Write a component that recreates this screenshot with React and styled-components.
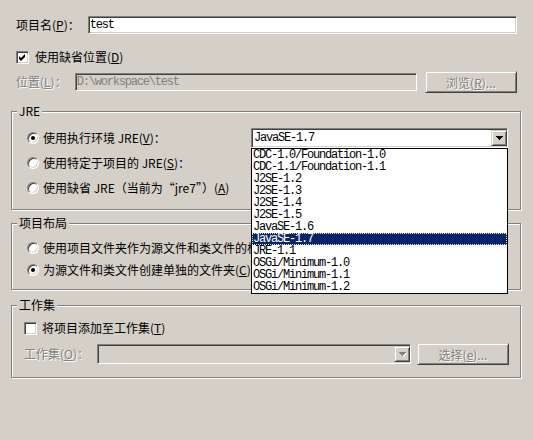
import styled, { createGlobalStyle, css } from "styled-components";

const GlobalStyle = createGlobalStyle`
  html, body {
    margin: 0;
    padding: 0;
    background: #d4d0c8;
  }
  body {
    font-family: "Noto Sans CJK SC", "Liberation Sans", sans-serif;
    font-size: 12px;
    color: #000;
  }
  u {
    text-underline-offset: 1px;
  }
`;

const sunken = css`
  box-sizing: border-box;
  border: 1px solid;
  border-color: #808080 #ffffff #ffffff #808080;
  box-shadow: inset 1px 1px #404040, inset -1px -1px #d4d0c8;
`;

const raised = css`
  box-sizing: border-box;
  border: 1px solid;
  border-color: #d4d0c8 #404040 #404040 #d4d0c8;
  box-shadow: inset 1px 1px #ffffff, inset -1px -1px #808080;
  background: #d4d0c8;
`;

const mono = css`
  font-family: "Liberation Mono", monospace;
  font-size: 12px;
  letter-spacing: -1.2px;
`;

const Page = styled.div`
  width: 533px;
  height: 440px;
  box-sizing: border-box;
  padding: 16px 12px 0 11px;
  display: flex;
  flex-direction: column;
  background: #d4d0c8;
  overflow: hidden;
`;

const Form = styled.div`
  display: flex;
  flex-direction: column;
  padding: 0 4px 0 5px;
`;

const Row = styled.div`
  display: flex;
  align-items: center;
  height: ${(p) => p.$h}px;
  margin-top: ${(p) => p.$mt || 0}px;
  gap: ${(p) => p.$gap ?? 8}px;
`;

const Label = styled.span`
  white-space: nowrap;
  line-height: 14px;
  color: ${(p) => (p.$disabled ? "#808080" : "#000")};
  text-shadow: ${(p) => (p.$disabled ? "1px 1px 0 #fff" : "none")};
`;

const TextField = styled.div`
  ${sunken}
  ${mono}
  flex: 1;
  height: 18px;
  padding: 0 1px;
  display: flex;
  align-items: center;
  white-space: nowrap;
  background: ${(p) => (p.$disabled ? "#d4d0c8" : "#fff")};
  color: ${(p) => (p.$disabled ? "#808080" : "#000")};
`;

const Button = styled.div`
  ${raised}
  width: 92px;
  height: 22px;
  flex-shrink: 0;
  margin-left: ${(p) => p.$ml || 0}px;
  display: flex;
  align-items: center;
  justify-content: center;
  white-space: nowrap;
  color: #808080;
  text-shadow: 1px 1px 0 #fff;
`;

const CheckBox = styled.span`
  ${sunken}
  width: 13px;
  height: 13px;
  flex-shrink: 0;
  background: #fff;
  display: inline-flex;
  align-items: center;
  justify-content: center;
`;

const Radio = styled.span`
  box-sizing: border-box;
  width: 12px;
  height: 12px;
  flex-shrink: 0;
  border-radius: 50%;
  border: 1px solid;
  border-color: #808080 #ffffff #ffffff #808080;
  box-shadow: inset 1px 1px #404040, inset -1px -1px #d4d0c8;
  background: #fff;
  display: inline-flex;
  align-items: center;
  justify-content: center;

  &::after {
    content: "";
    width: 4px;
    height: 4px;
    border-radius: 50%;
    background: ${(p) => (p.$checked ? "#000" : "transparent")};
  }
`;

const Group = styled.fieldset`
  margin: ${(p) => p.$mt}px 0 0 0;
  padding: 0;
  min-width: 0;
  border: 1px solid #808080;
  box-shadow: inset 1px 1px #fff, 1px 1px #fff;
`;

const Legend = styled.legend`
  margin-left: 5px;
  padding: 0 2px;
  line-height: 14px;
  background: #d4d0c8;
  white-space: nowrap;
`;

const GroupBody = styled.div`
  display: flex;
  flex-direction: column;
  padding: ${(p) => p.$pad};
`;

const OptionRow = styled.div`
  display: flex;
  align-items: center;
  height: ${(p) => p.$h}px;
  margin-top: ${(p) => p.$mt || 0}px;
  gap: ${(p) => p.$gap ?? 4}px;
`;

const ComboWrap = styled.div`
  position: relative;
  width: ${(p) => (p.$width ? `${p.$width}px` : "auto")};
  flex: ${(p) => (p.$width ? "0 0 auto" : "1")};
  margin-left: ${(p) => (p.$push ? "auto" : "0")};
`;

const Combo = styled.div`
  ${sunken}
  height: 20px;
  padding: 1px;
  display: flex;
  align-items: center;
  background: ${(p) => (p.$disabled ? "#d4d0c8" : "#fff")};
`;

const ComboText = styled.span`
  ${mono}
  flex: 1;
  padding-left: 1px;
  white-space: nowrap;
`;

const ArrowButton = styled.span`
  ${raised}
  width: 16px;
  height: 16px;
  margin: -1px;
  display: flex;
  align-items: center;
  justify-content: center;
`;

const DropList = styled.div`
  position: absolute;
  top: 100%;
  left: 0;
  right: 0;
  z-index: 10;
  box-sizing: border-box;
  border: 1px solid #000;
  background: #fff;
  display: flex;
  flex-direction: column;
`;

const ListItem = styled.div`
  ${mono}
  height: 12px;
  line-height: 12px;
  padding-left: 1px;
  white-space: nowrap;
  color: ${(p) => (p.$selected ? "#fff" : "#000")};
  background: ${(p) => (p.$selected ? "#0a246a" : "transparent")};
  outline: ${(p) => (p.$selected ? "1px dotted #e8e8b0" : "none")};
  outline-offset: -1px;
`;

const Arrow = ({ disabled }) => (
  <svg width="7" height="4" viewBox="0 0 7 4" style={{ overflow: "visible" }}>
    {disabled && (
      <path d="M1 1h7v1H1zM2 2h5v1H2zM3 3h3v1H3zM4 4h1v1H4z" fill="#fff" />
    )}
    <path
      d="M0 0h7v1H0zM1 1h5v1H1zM2 2h3v1H2zM3 3h1v1H3z"
      fill={disabled ? "#808080" : "#000"}
    />
  </svg>
);

const Check = () => (
  <svg width="7" height="7" viewBox="0 0 7 7">
    <path d="M0 2L2 4L6 0V3L2 7L0 5Z" fill="#000" />
  </svg>
);

const environments = [
  "CDC-1.0/Foundation-1.0",
  "CDC-1.1/Foundation-1.1",
  "J2SE-1.2",
  "J2SE-1.3",
  "J2SE-1.4",
  "J2SE-1.5",
  "JavaSE-1.6",
  "JavaSE-1.7",
  "JRE-1.1",
  "OSGi/Minimum-1.0",
  "OSGi/Minimum-1.1",
  "OSGi/Minimum-1.2",
];

const App = () => {
  const selected = "JavaSE-1.7";

  return (
    <Page>
      <GlobalStyle />
      <Form>
        <Row $h={18}>
          <Label>
            项目名(<u>P</u>)：
          </Label>
          <TextField>test</TextField>
        </Row>
        <Row $h={20} $mt={13} $gap={6}>
          <CheckBox>
            <Check />
          </CheckBox>
          <Label>
            使用缺省位置(<u>D</u>)
          </Label>
        </Row>
        <Row $h={22} $mt={4}>
          <Label $disabled>
            位置(<u>L</u>)：
          </Label>
          <TextField $disabled>D:\workspace\test</TextField>
          <Button>
            浏览(<u>R</u>)...
          </Button>
        </Row>
      </Form>

      <Group $mt={11}>
        <Legend>JRE</Legend>
        <GroupBody $pad="7px 12px 9px 15px">
          <OptionRow $h={25}>
            <Radio $checked />
            <Label>
              使用执行环境 JRE(<u>V</u>)：
            </Label>
            <ComboWrap $width={257} $push>
              <Combo>
                <ComboText>{selected}</ComboText>
                <ArrowButton>
                  <Arrow />
                </ArrowButton>
              </Combo>
              <DropList>
                {environments.map((env) => (
                  <ListItem key={env} $selected={env === selected}>
                    {env}
                  </ListItem>
                ))}
              </DropList>
            </ComboWrap>
          </OptionRow>
          <OptionRow $h={25}>
            <Radio />
            <Label>
              使用特定于项目的 JRE(<u>S</u>)：
            </Label>
          </OptionRow>
          <OptionRow $h={25}>
            <Radio />
            <Label>
              使用缺省 JRE（当前为“jre7”）(<u>A</u>)
            </Label>
          </OptionRow>
        </GroupBody>
      </Group>

      <Group $mt={6}>
        <Legend>项目布局</Legend>
        <GroupBody $pad="7px 12px 8px 15px">
          <OptionRow $h={22}>
            <Radio />
            <Label>
              使用项目文件夹作为源文件和类文件的根目录(<u>P</u>)
            </Label>
          </OptionRow>
          <OptionRow $h={22}>
            <Radio $checked />
            <Label>
              为源文件和类文件创建单独的文件夹(<u>C</u>)
            </Label>
          </OptionRow>
        </GroupBody>
      </Group>

      <Group $mt={8}>
        <Legend>工作集</Legend>
        <GroupBody $pad="6px 11px 12px 12px">
          <OptionRow $h={20} $gap={5}>
            <CheckBox />
            <Label>
              将项目添加至工作集(<u>T</u>)
            </Label>
          </OptionRow>
          <OptionRow $h={22} $mt={5} $gap={8}>
            <Label $disabled>
              工作集(<u>O</u>)：
            </Label>
            <ComboWrap>
              <Combo $disabled>
                <ComboText />
                <ArrowButton>
                  <Arrow disabled />
                </ArrowButton>
              </Combo>
            </ComboWrap>
            <Button $ml={-2}>
              选择(<u>e</u>)...
            </Button>
          </OptionRow>
        </GroupBody>
      </Group>
    </Page>
  );
};

export default App;
